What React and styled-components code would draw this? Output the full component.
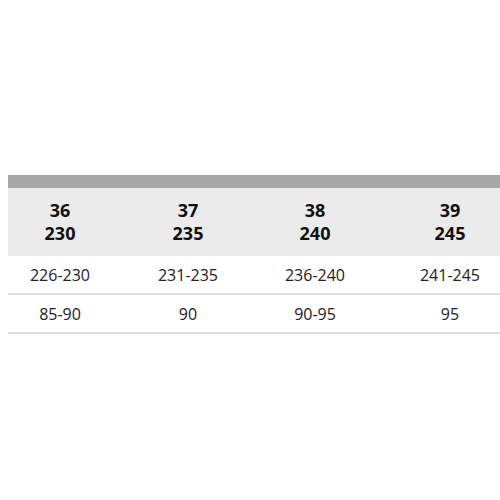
import styled, { createGlobalStyle } from "styled-components";

const GlobalStyle = createGlobalStyle`
  html, body {
    margin: 0;
    padding: 0;
    background: #ffffff;
    overflow: hidden;
  }
  body {
    font-family: "Open Sans", "DejaVu Sans", sans-serif;
    color: #1e1e1e;
  }
`;

const sizes = [
  { eu: "36", mm: "230", length: "226-230", width: "85-90" },
  { eu: "37", mm: "235", length: "231-235", width: "90" },
  { eu: "38", mm: "240", length: "236-240", width: "90-95" },
  { eu: "39", mm: "245", length: "241-245", width: "95" },
];

const Page = styled.div`
  width: 500px;
  height: 500px;
  padding-top: 175px;
  padding-left: 8px;
  box-sizing: border-box;
  overflow: hidden;
`;

const Table = styled.div`
  width: 526px;
`;

const TopBar = styled.div`
  height: 13px;
  background: #a7a7a7;
`;

const Row = styled.div`
  display: grid;
  grid-template-columns: 104px 152px 102px 168px;
  align-items: center;
  height: ${(p) => p.$height}px;
  background: ${(p) => p.$bg || "#ffffff"};
  border-bottom: ${(p) => (p.$line ? "2px solid #dedede" : "none")};
`;

const HeadCell = styled.div`
  text-align: center;
  font-weight: 700;
  font-size: 18px;
  line-height: 23px;
  color: #111;
`;

const Cell = styled.div`
  text-align: center;
  font-size: 16px;
  color: #222;
`;

export default function App() {
  return (
    <>
      <GlobalStyle />
      <Page>
        <Table>
          <TopBar />
          <Row $height={68} $bg="#ebebeb">
            {sizes.map((s) => (
              <HeadCell key={s.eu}>
                {s.eu}
                <br />
                {s.mm}
              </HeadCell>
            ))}
          </Row>
          <Row $height={37} $line>
            {sizes.map((s) => (
              <Cell key={s.eu}>{s.length}</Cell>
            ))}
          </Row>
          <Row $height={37} $line>
            {sizes.map((s) => (
              <Cell key={s.eu}>{s.width}</Cell>
            ))}
          </Row>
        </Table>
      </Page>
    </>
  );
}
